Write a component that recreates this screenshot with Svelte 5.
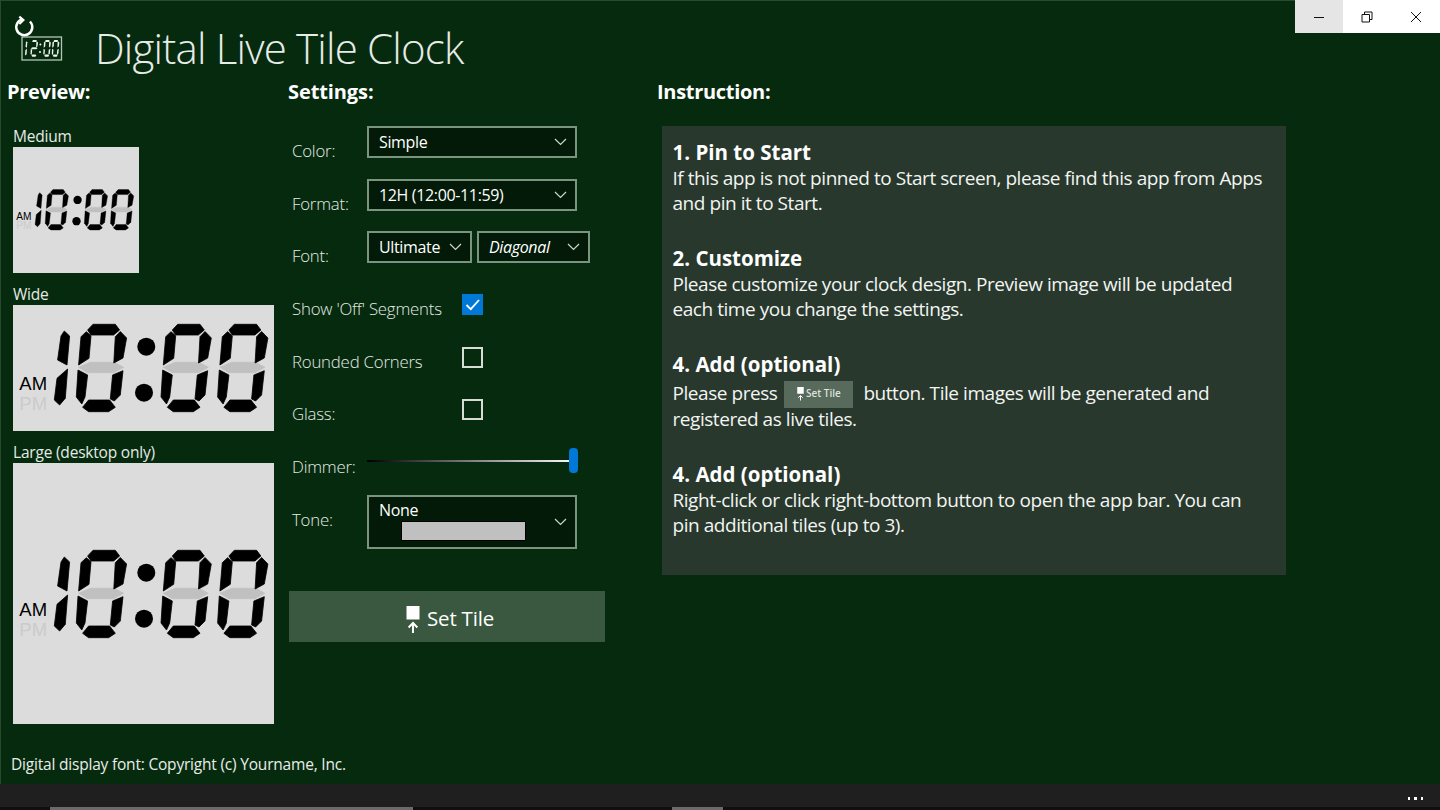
<script>
  const segs = {
    a: '11.3,6 16.7,.3 39,.3 43.3,6 37.3,11 14.7,11',
    b: '44,7.5 50.3,14 46.7,34 37.5,39 39,12.7',
    c: '46.7,46.7 44,71 38,77 34,75 36.3,51',
    d: '6.3,83.3 12.3,76 33.3,76 39,83.3 32.3,87.7 12.3,87.7',
    e: '1.7,46 11.3,51 8.7,73 5.5,80 0,73',
    f: '10,7.7 14.7,11.7 12.7,34.3 2.3,41 4.7,12.7',
    g: '2.3,43.3 14,38.3 38,38.3 47.3,43.3 37.3,48.7 11.3,48.7'
  };
  const zero = ['a', 'b', 'c', 'd', 'e', 'f'];
  const two = ['a', 'b', 'g', 'e', 'd'];
  const one = [
    '10,7 15.3,12 12.7,41 3.3,36 6.7,12',
    '13.3,45 11,74.3 5.3,81 0,76 2.7,54.3'
  ];
  const digitX = [63.3, 148, 204.6];
</script>

{#snippet clock()}
  <svg class="clock" viewBox="0 -1 262 90" role="img" aria-label="10:00 AM">
    <text class="am" x="6.3" y="66">AM</text>
    <text class="pm" x="6.3" y="86">PM</text>
    <g transform="translate(41.3 0)">
      {#each one as p}<polygon points={p} />{/each}
    </g>
    {#each digitX as x}
      <g transform="translate({x} 0)">
        <polygon class="off" points={segs.g} />
        {#each zero as s}<polygon points={segs[s]} />{/each}
      </g>
    {/each}
    <circle cx="133.3" cy="22.7" r="9" />
    <circle cx="131" cy="68.7" r="9" />
  </svg>
{/snippet}

{#snippet chevron()}
  <svg class="chev" viewBox="0 0 13 8" aria-hidden="true">
    <polyline points="1,1 6.5,6.5 12,1" />
  </svg>
{/snippet}

{#snippet tileIcon(cls)}
  <svg class={cls} viewBox="0 0 14 28" aria-hidden="true">
    <rect x="0.5" y="0" width="13" height="13.5" fill="#fff" />
    <path d="M7 27V17.5M2.6 21.5 7 17l4.4 4.5" fill="none" stroke="#fff" stroke-width="2" />
  </svg>
{/snippet}

<div class="app">
  <header class="head">
    <svg class="logo" viewBox="0 0 50 48" aria-hidden="true">
      <path d="M9 4.2A8 8 0 1 0 16 6.5" fill="none" stroke="#fff" stroke-width="2.5" />
      <path d="M5.3 1.7 9.3 5 5.3 9" fill="none" stroke="#fff" stroke-width="2.3" />
      <rect x="8" y="22" width="39.5" height="23" fill="none" stroke="#b4c5b6" stroke-width="1.3" />
      <g class="lcd">
        <g transform="translate(11 25) scale(.15 .19)">
          {#each one as p}<polygon points={p} />{/each}
        </g>
        <g transform="translate(16.5 25) scale(.15 .19)">
          {#each two as s}<polygon points={segs[s]} />{/each}
        </g>
        <circle cx="26.4" cy="29.5" r="1" />
        <circle cx="26" cy="37" r="1" />
        <g transform="translate(29.3 25) scale(.15 .19)">
          {#each zero as s}<polygon points={segs[s]} />{/each}
        </g>
        <g transform="translate(37.8 25) scale(.15 .19)">
          {#each zero as s}<polygon points={segs[s]} />{/each}
        </g>
      </g>
    </svg>
    <h1>Digital Live Tile Clock</h1>
  </header>

  <main class="cols">
    <section class="col-preview">
      <h2>Preview:</h2>
      <div class="tile-label first">Medium</div>
      <div class="tile medium">{@render clock()}</div>
      <div class="tile-label">Wide</div>
      <div class="tile wide">{@render clock()}</div>
      <div class="tile-label">Large (desktop only)</div>
      <div class="tile large">{@render clock()}</div>
    </section>

    <section class="col-settings">
      <h2>Settings:</h2>
      <div class="rows">
        <div class="row">
          <span class="lbl">Color:</span>
          <div class="select full"><span>Simple</span>{@render chevron()}</div>
        </div>
        <div class="row">
          <span class="lbl">Format:</span>
          <div class="select full"><span>12H (12:00-11:59)</span>{@render chevron()}</div>
        </div>
        <div class="row">
          <span class="lbl">Font:</span>
          <div class="select ultimate"><span>Ultimate</span>{@render chevron()}</div>
          <div class="select diagonal"><span>Diagonal</span>{@render chevron()}</div>
        </div>
        <div class="row">
          <span class="lbl wide-lbl">Show 'Off' Segments</span>
          <div class="cb on">
            <svg viewBox="0 0 21 21" aria-hidden="true"><polyline points="4.5,11 8.8,15.2 17,6" /></svg>
          </div>
        </div>
        <div class="row">
          <span class="lbl wide-lbl">Rounded Corners</span>
          <div class="cb"></div>
        </div>
        <div class="row">
          <span class="lbl wide-lbl">Glass:</span>
          <div class="cb"></div>
        </div>
        <div class="row">
          <span class="lbl">Dimmer:</span>
          <div class="slider"><div class="track"></div><div class="thumb"></div></div>
        </div>
        <div class="row">
          <span class="lbl">Tone:</span>
          <div class="select tone">
            <div class="tone-body">
              <span>None</span>
              <div class="swatch"></div>
            </div>
            {@render chevron()}
          </div>
        </div>
      </div>
      <button class="set-tile" type="button">
        {@render tileIcon('big-icon')}
        <span>Set Tile</span>
      </button>
    </section>

    <section class="col-instr">
      <h2>Instruction:</h2>
      <div class="panel">
        <h3>1. Pin to Start</h3>
        <p>If this app is not pinned to Start screen, please find this app from Apps<br />and pin it to Start.</p>
        <h3>2. Customize</h3>
        <p>Please customize your clock design. Preview image will be updated<br />each time you change the settings.</p>
        <h3>4. Add (optional)</h3>
        <p>
          <span class="press">Please press<span class="mini">{@render tileIcon('mini-icon')}<span>Set Tile</span></span>button. Tile images will be generated and</span>
          registered as live tiles.
        </p>
        <h3>4. Add (optional)</h3>
        <p>Right-click or click right-bottom button to open the app bar. You can<br />pin additional tiles (up to 3).</p>
      </div>
    </section>
  </main>

  <footer class="note">Digital display font: Copyright (c) Yourname, Inc.</footer>

  <div class="appbar"><span class="more"><i></i><i></i><i></i></span></div>
  <div class="scroll">
    <div class="thumb1"></div>
    <div class="thumb2"></div>
  </div>

  <div class="winctl">
    <div class="wb hover">
      <svg viewBox="0 0 12 12" aria-hidden="true"><path d="M1 6.5h10" /></svg>
    </div>
    <div class="wb">
      <svg viewBox="0 0 12 12" aria-hidden="true"><path d="M1 3.5h7.5v7.5H1zM3.5 3.5V1H11v7.5H8.5" /></svg>
    </div>
    <div class="wb">
      <svg viewBox="0 0 12 12" aria-hidden="true"><path d="M1 1l10 10M11 1 1 11" /></svg>
    </div>
  </div>
</div>

<style>
  :global(body) {
    margin: 0;
    background: #062a0e;
  }
  .app {
    position: relative;
    width: 1440px;
    height: 810px;
    box-sizing: border-box;
    overflow: hidden;
    display: flex;
    flex-direction: column;
    background: #062a0e;
    box-shadow: inset 1px 1px 0 #2a4a30;
    color: #fff;
    font-family: "Open Sans", "Noto Sans", sans-serif;
  }
  .head {
    height: 78px;
    display: flex;
    align-items: flex-start;
    flex: none;
  }
  .logo {
    width: 50px;
    height: 48px;
    margin: 15px 0 0 14px;
    flex: none;
  }
  .logo .lcd {
    fill: #f0f4f0;
  }
  h1 {
    margin: 17px 0 0 31px;
    font-size: 42px;
    line-height: 62px;
    font-weight: 300;
    color: #e6ece7;
    letter-spacing: -0.8px;
    white-space: nowrap;
  }
  .cols {
    display: flex;
    height: 648px;
    flex: none;
  }
  h2 {
    margin: 0;
    font-size: 20px;
    line-height: 28px;
    font-weight: 700;
    letter-spacing: -0.3px;
  }
  .col-settings h2 {
    letter-spacing: -0.1px;
  }
  .col-preview {
    width: 288px;
    flex: none;
    padding-left: 7px;
    box-sizing: border-box;
  }
  .tile-label {
    margin-left: 6px;
    font-size: 15.5px;
    line-height: 18px;
    height: 20px;
    margin-top: 12px;
    color: #e4eae5;
    letter-spacing: -0.2px;
  }
  .tile-label.first {
    margin-top: 19px;
    height: 22px;
    line-height: 22px;
  }
  .tile {
    margin-left: 6px;
    background: #dcdcdc;
    display: flex;
    align-items: center;
    justify-content: center;
    width: 261px;
  }
  .medium {
    width: 126px;
    height: 126px;
  }
  .medium .clock {
    width: 121px;
  }
  .medium .clock text {
    font-size: 22px;
    transform: translate(-5.8px, 0);
  }
  .wide {
    height: 126px;
  }
  .large {
    height: 261px;
  }
  .clock {
    width: 262px;
    display: block;
    flex: none;
    fill: #000;
  }
  .clock polygon {
    stroke: #000;
    stroke-width: 0.8;
    stroke-linejoin: round;
  }
  .clock .off {
    fill: #c0c0c0;
    stroke: #c0c0c0;
  }
  .clock text {
    font-family: "Liberation Sans", sans-serif;
    font-size: 18.5px;
  }
  .clock .pm {
    fill: #cbcbcb;
  }
  .col-settings {
    width: 369px;
    flex: none;
  }
  .rows {
    padding: 20px 0 0 4px;
  }
  .row {
    display: flex;
    align-items: flex-start;
    height: 52.7px;
    position: relative;
  }
  .lbl {
    width: 75px;
    flex: none;
    padding-top: 13px;
    font-size: 16.8px;
    line-height: 24px;
    font-weight: 300;
    color: #e4eae5;
    letter-spacing: -0.2px;
    white-space: nowrap;
  }
  .wide-lbl {
    width: 170px;
  }
  .select {
    box-sizing: border-box;
    height: 32px;
    display: flex;
    align-items: center;
    justify-content: space-between;
    padding: 0 8px 0 10px;
    background: #021a07;
    border: 2px solid #7b947f;
    font-size: 16px;
    letter-spacing: -0.35px;
    color: #fff;
    white-space: nowrap;
  }
  .full {
    width: 210px;
  }
  .ultimate {
    width: 105px;
    margin-right: 5px;
  }
  .diagonal {
    width: 113px;
    font-style: italic;
  }
  .tone {
    width: 210px;
    height: 54px;
  }
  .tone-body {
    align-self: stretch;
    padding-top: 3px;
    line-height: 20px;
    flex: 1;
  }
  .tone-body span {
    display: block;
  }
  .swatch {
    width: 125px;
    height: 20px;
    margin: 1px 0 0 22px;
    box-sizing: border-box;
    background: #c0c0c0;
    border: 1px solid #000;
  }
  .chev {
    width: 13px;
    height: 8px;
    flex: none;
  }
  .chev polyline {
    fill: none;
    stroke: #cfd6d0;
    stroke-width: 1.2;
  }
  .cb {
    width: 21px;
    height: 21px;
    margin-top: 10px;
    box-sizing: border-box;
    border: 2px solid #d5ddd6;
  }
  .cb.on {
    background: #0078d7;
    border: none;
  }
  .cb svg {
    display: block;
    width: 21px;
    height: 21px;
  }
  .cb polyline {
    fill: none;
    stroke: #fff;
    stroke-width: 1.8;
  }
  .slider {
    width: 211px;
    height: 30px;
    margin-top: 5px;
    position: relative;
  }
  .track {
    position: absolute;
    left: 0;
    right: 2px;
    top: 13px;
    height: 2px;
    background: linear-gradient(90deg, #000, #fff);
  }
  .thumb {
    position: absolute;
    right: 0;
    top: 1px;
    width: 9px;
    height: 25px;
    border-radius: 4px;
    background: #0078d7;
  }
  .set-tile {
    display: flex;
    align-items: center;
    justify-content: center;
    gap: 7px;
    width: 316px;
    height: 51px;
    box-sizing: border-box;
    margin: 43px 0 0 1px;
    padding: 3px 0 0 6px;
    border: none;
    background: #3a573f;
    color: #fff;
    font-family: inherit;
    font-size: 20.5px;
    letter-spacing: -0.2px;
  }
  .big-icon {
    width: 14px;
    height: 28px;
    margin-top: 4px;
    display: block;
  }
  .col-instr {
    flex: none;
    width: 640px;
  }
  .panel {
    box-sizing: border-box;
    width: 624px;
    height: 449px;
    margin: 20px 0 0 5px;
    padding: 13px 10px 0 10.5px;
    background: #29382d;
  }
  h3 {
    margin: 0;
    font-size: 20.5px;
    line-height: 26.5px;
    font-weight: 700;
    letter-spacing: 0;
  }
  .panel p {
    margin: 0 0 28.5px;
    font-size: 19px;
    line-height: 25.5px;
    letter-spacing: -0.45px;
    color: #f2f5f2;
    white-space: nowrap;
  }
  .press {
    display: flex;
    align-items: center;
    height: 27px;
    margin: 3px 0 -0.5px;
  }
  .mini {
    display: inline-flex;
    align-items: center;
    justify-content: center;
    gap: 2px;
    width: 69px;
    height: 27px;
    margin: 0 10px 0 7px;
    background: #576a5b;
    font-size: 10px;
    font-weight: 600;
    letter-spacing: 0;
    color: #dde3de;
  }
  .mini-icon {
    width: 7px;
    height: 14px;
    display: block;
  }
  .note {
    flex: none;
    height: 20px;
    padding: 0 0 0 11px;
    margin-top: 28px;
    font-size: 15.5px;
    line-height: 20px;
    letter-spacing: -0.2px;
    color: #e8ede9;
  }
  .appbar {
    position: absolute;
    left: 0;
    right: 0;
    top: 784px;
    height: 23px;
    background: #1f1f1f;
  }
  .more {
    position: absolute;
    left: 1407.5px;
    top: 13px;
    display: flex;
    gap: 4px;
  }
  .more i {
    width: 2.5px;
    height: 2.5px;
    background: #fff;
  }
  .scroll {
    position: absolute;
    left: 0;
    right: 0;
    top: 807px;
    height: 3px;
    background: #0f0f0f;
  }
  .thumb1,
  .thumb2 {
    position: absolute;
    top: 0;
    height: 3px;
    background: #6a6a6a;
  }
  .thumb1 {
    left: 50px;
    width: 363px;
  }
  .thumb2 {
    left: 672px;
    width: 51px;
  }
  .winctl {
    position: absolute;
    top: 0;
    right: 0;
    display: flex;
    height: 33px;
    width: 145px;
    background: #fff;
  }
  .wb {
    width: 48.3px;
    display: flex;
    align-items: center;
    justify-content: center;
  }
  .wb.hover {
    background: #e5e5e5;
  }
  .wb svg {
    width: 12px;
    height: 12px;
    fill: none;
    stroke: #111;
    stroke-width: 1;
  }
</style>
